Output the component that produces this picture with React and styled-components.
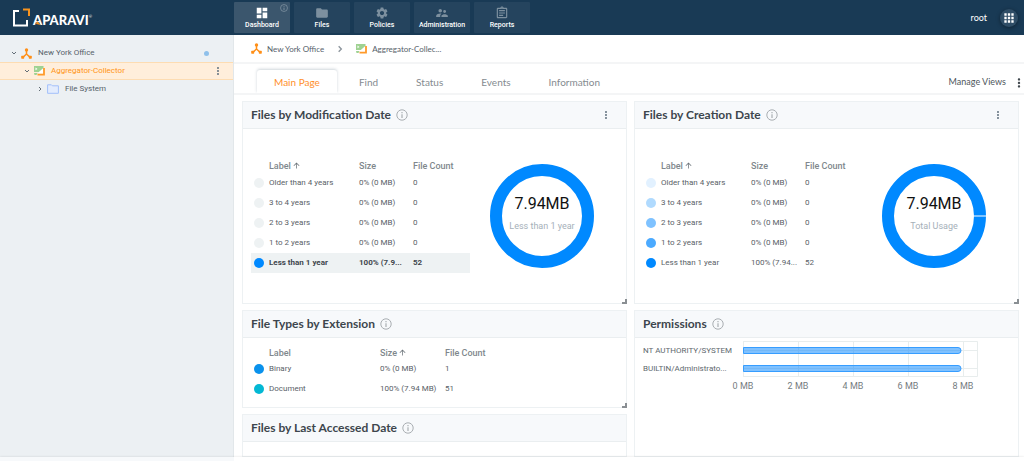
import React from "react";
import styled, { createGlobalStyle, css } from "styled-components";
import {
  MdDashboard,
  MdFolder,
  MdSettings,
  MdSupervisorAccount,
  MdOutlineAssignment,
  MdApps,
  MdMoreVert,
  MdArrowUpward,
} from "react-icons/md";

const sans = `Roboto, "Liberation Sans", sans-serif`;
const round = `Lato, "Open Sans", sans-serif`;

const GlobalStyle = createGlobalStyle`
  *, *::before, *::after { box-sizing: border-box; }
  body { margin: 0; font-family: ${sans}; color: #56616a; background: #fff; }
  button { font: inherit; color: inherit; background: none; border: 0; padding: 0; cursor: pointer; }
  a { color: inherit; text-decoration: none; }
  svg { display: block; flex: none; }
`;

const Page = styled.div`
  display: flex;
  flex-direction: column;
  height: 100vh;
  overflow: hidden;
`;

const Header = styled.header`
  display: flex;
  align-items: center;
  flex: none;
  height: 35px;
  background: #193a55;
`;

const Brand = styled.a`
  display: flex;
  align-items: center;
  gap: 3px;
  width: 234px;
  padding-left: 12px;
`;

const BrandName = styled.span`
  position: relative;
  display: flex;
  font: 900 13px/16px ${round};
  color: #fff;
  padding-top: 4px;
`;

const BrandAccent = styled.svg`
  position: absolute;
  left: 3px;
  bottom: 3px;
`;

const Registered = styled.span`
  font: 400 4px/10px ${round};
`;

const Nav = styled.nav`
  display: flex;
  gap: 4px;
  flex: 1;
`;

const NavItem = styled.a`
  position: relative;
  display: flex;
  flex-direction: column;
  align-items: center;
  width: 56px;
  height: 31px;
  padding-top: 4px;
  border-radius: 1px;
  font: 500 7px/10px ${sans};
  color: #fff;
  background: ${(p) => (p.$active ? "#3b566d" : "#25445e")};
  > svg { color: ${(p) => (p.$active ? "#fff" : "#7d909f")}; }
`;

const Hint = styled.span`
  position: absolute;
  top: 2px;
  right: 2px;
  color: #8d9dab;
`;

const User = styled.span`
  font: 400 9px/12px ${round};
  color: #fff;
  margin-right: 13px;
`;

const AppsButton = styled.button`
  display: grid;
  place-items: center;
  width: 18px;
  height: 18px;
  margin-right: 6px;
  border-radius: 50%;
  background: #2f4d66;
  box-shadow: 0 1px 4px rgba(0, 0, 0, 0.4);
  && { color: #fff; }
`;

const Body = styled.div`
  display: flex;
  flex: 1;
  min-height: 0;
`;

const Sidebar = styled.aside`
  flex: none;
  width: 234px;
  padding-top: 9px;
  background: #ecf0f3;
  border-right: 1px solid #e2e7ea;
`;

const TreeRow = styled.div`
  display: flex;
  align-items: center;
  height: 18px;
  padding: 0 11px 0 ${(p) => 11 + p.$level * 13}px;
  border: solid transparent;
  border-width: 1px 0;
  font: 400 8px/12px ${sans};
  color: #56616a;
  ${(p) =>
    p.$active &&
    css`
      color: #ff9416;
      background: #ffeedb;
      border-color: #fddcb2;
    `}
`;

const TreeLabel = styled.a`
  flex: 1;
  margin-left: 6px;
`;

const TreeToggle = styled.button`
  width: 6px;
  height: 6px;
  margin-right: 4px;
  && { color: #636e77; }
`;

const Dot = styled.span`
  display: block;
  width: ${(p) => p.$size}px;
  height: ${(p) => p.$size}px;
  border-radius: 50%;
  background: ${(p) => p.$color};
`;

const StatusDot = styled(Dot)`
  margin-right: 13px;
`;

const MoreButton = styled.button`
  width: 10px;
  height: 12px;
  display: grid;
  place-items: center;
  && { color: ${(p) => p.$color || "#6d7c88"}; }
`;

const Main = styled.main`
  flex: 1;
  min-width: 0;
  display: flex;
  flex-direction: column;
`;

const Crumbs = styled.nav`
  display: flex;
  align-items: center;
  flex: none;
  height: 29px;
  padding: 0 17px;
  border-bottom: 2px solid #f4f5f6;
  font: 400 8px/12px ${round};
`;

const Crumb = styled.a`
  display: flex;
  align-items: center;
  gap: 5px;
`;

const CrumbSep = styled.span`
  margin: 0 12px;
  color: #8b949c;
`;

const TabBar = styled.div`
  display: flex;
  align-items: flex-end;
  flex: none;
  height: 31px;
  padding: 0 2px 0 23px;
  border-bottom: 2px solid #f4f5f6;
`;

const TabList = styled.div`
  display: flex;
  flex: 1;
`;

const Tab = styled.button`
  height: 23px;
  padding: 1px ${(p) => (p.$active ? 17 : 19)}px 0;
  && {
    font: 400 10px/22px ${round};
    color: ${(p) => (p.$active ? "#ff8f2a" : "#858b90")};
  }
  ${(p) =>
    p.$active &&
    css`
      border-radius: 3px 3px 0 0;
      box-shadow: 0 -1px 3px rgba(50, 80, 100, 0.24);
      clip-path: inset(-4px -4px 0 -4px);
      margin-right: 3px;
    `}
`;

const ViewActions = styled.div`
  display: flex;
  align-items: center;
  gap: 6px;
  height: 23px;
`;

const ManageViews = styled.button`
  && { font: 400 9px/22px ${round}; color: #4e565c; }
`;

const Board = styled.div`
  display: flex;
  gap: 7px;
  flex: 1;
  min-height: 0;
  padding: 6px 5px 0 8px;
  overflow: hidden;
`;

const Column = styled.div`
  flex: 1;
  min-width: 0;
  display: flex;
  flex-direction: column;
  gap: 6px;
`;

const CardBox = styled.section`
  position: relative;
  flex: ${(p) => (p.$fill ? "1 0 auto" : "none")};
  border: 1px solid #edf1f3;
  background: #fff;
`;

const CardHead = styled.header`
  display: flex;
  align-items: center;
  gap: 5px;
  height: 27px;
  padding: 0 16px 0 8px;
  background: #f7f9fb;
  border-bottom: 1px solid #eaeef0;
  color: #a9aeb2;
`;

const CardTitle = styled.h2`
  margin: 0;
  font: 700 12px/16px ${round};
  color: #3d464d;
`;

const HeadSpacer = styled.span`
  flex: 1;
`;

const CardBody = styled.div`
  display: flex;
  align-items: center;
  min-height: ${(p) => p.$min || 0}px;
  padding: ${(p) => p.$pad || "0 8px"};
`;

const ResizeGrip = styled.span`
  position: absolute;
  right: -1px;
  bottom: -1px;
  width: 5px;
  height: 5px;
  border: solid #8a8f93;
  border-width: 0 2px 2px 0;
`;

const Table = styled.table`
  table-layout: fixed;
  width: ${(p) => p.$width}px;
  border-collapse: collapse;
  font: 400 8px/12px ${sans};
  color: #596167;
  th, td {
    padding: 0;
    text-align: left;
    white-space: nowrap;
  }
  td:first-child { padding-left: 3px; }
`;

const HeadCell = styled.th`
  height: 13px;
  font-weight: 500;
  color: #80878c;
  font-size: 9px;
  svg { display: inline-block; vertical-align: -1px; margin-left: 1px; color: #6a7278; }
`;

const Row = styled.tr`
  height: 20px;
  ${(p) =>
    p.$selected &&
    css`
      background: #eef2f3;
      font-weight: 700;
      color: #3f474d;
    `}
`;

const DonutSlot = styled.div`
  flex: 1;
  display: flex;
  justify-content: center;
  padding-right: 4px;
`;

const Footer = styled.footer`
  flex: none;
  height: 4px;
  background: linear-gradient(to right, #f7f9fb 234px, #fff 234px);
  box-shadow: 0 -1px 2px rgba(0, 0, 0, 0.06);
  position: relative;
`;

function Logo() {
  return (
    <svg width="18" height="20" viewBox="0 0 18 20" fill="none">
      <path d="M7 3H2V17.500H15V12" stroke="#fff" strokeWidth="2" />
      <path d="M11 1.500H17V8" stroke="#f7931e" strokeWidth="2" />
    </svg>
  );
}

function NetworkIcon() {
  return (
    <svg width="11" height="11" viewBox="0 0 11 11">
      <path d="M5.500 2V6L2 9.200M5.500 6L9 9.200" stroke="#ff8f17" strokeWidth="1.500" fill="none" />
      <circle cx="5.500" cy="1.900" r="1.700" fill="#ff8f17" />
      <rect x="0.200" y="7.700" width="3" height="3" rx="0.600" fill="#ff8f17" />
      <rect x="7.800" y="7.700" width="3" height="3" rx="0.600" fill="#ff8f17" />
    </svg>
  );
}

function CollectorIcon() {
  return (
    <svg width="11" height="10" viewBox="0 0 11 10">
      <path d="M0 0H9.500V2L5 6H0Z" fill="#9fd292" />
      <path d="M1.500 1.500L3.500 3L1.500 4.200Z" fill="#fff" />
      <path d="M0 7H3.500L2.500 9H0.500Z" fill="#9fd292" />
      <path d="M4.500 6.500L9 2.500V7.500H4.500Z" fill="#fff" />
      <path d="M10 2V8.700H3.500" stroke="#ff9a2a" strokeWidth="1.800" fill="none" />
    </svg>
  );
}

function FolderIcon() {
  return (
    <svg width="12" height="10" viewBox="0 0 12 10">
      <path d="M0.600 0.800H4.400L5.400 1.800H11.400V9.300H0.600Z" fill="#e3ecfd" stroke="#a3c0fa" />
    </svg>
  );
}

function Chevron({ down, size = 6 }) {
  return (
    <svg width={size} height={size} viewBox="0 0 6 6" fill="none" stroke="currentColor" strokeWidth="1">
      <path d={down ? "M1 2L3 4L5 2" : "M2 1L4 3L2 5"} />
    </svg>
  );
}

function InfoIcon({ size = 12 }) {
  return (
    <svg width={size} height={size} viewBox="0 0 12 12" fill="none" stroke="currentColor">
      <circle cx="6" cy="6" r="5.200" />
      <path d="M6 5.300V9M6 3V4.200" strokeWidth="1.200" />
    </svg>
  );
}

function Donut({ caption, notch }) {
  return (
    <svg width="106" height="106" viewBox="0 0 106 106" role="img" aria-label={`7.94MB ${caption}`}>
      <circle cx="53" cy="53" r="46" fill="none" stroke="#0089ff" strokeWidth="12" />
      {notch && <path d="M93 53H106" stroke="#fff" />}
      <text x="53" y="46" textAnchor="middle" fontFamily="Roboto" fontSize="16" fill="#111">
        7.94MB
      </text>
      <text x="53" y="66" textAnchor="middle" fontFamily="Roboto" fontSize="9" fill="#a5b0b9">
        {caption}
      </text>
    </svg>
  );
}

function PermissionsChart() {
  const ticks = [0, 2, 4, 6, 8];
  const rows = ["NT AUTHORITY/SYSTEM", "BUILTIN/Administrato..."];
  return (
    <svg width="350" height="56" viewBox="0 0 350 56" fontFamily="Roboto" role="img" aria-label="Permissions">
      <path d="M100.500 1.500H334.500V36.500H100.500ZM100 10.500H334M100 28.500H334" fill="none" stroke="#e8eded" />
      {ticks.map((t, i) => (
        <g key={t}>
          <path d={`M${100 + i * 55}.500 1V37`} stroke="#e8eded" />
          <text x={100 + i * 55} y="49" textAnchor="middle" fontSize="9" fill="#757c81">
            {t} MB
          </text>
        </g>
      ))}
      {rows.map((label, i) => (
        <g key={label}>
          <text x="0" y={13 + i * 18} fontSize="8" fill="#60686e">
            {label}
          </text>
          <path
            d={`M100.500 ${7 + i * 18}.500H315Q318 ${7 + i * 18}.500 318 ${10 + i * 18}.500T315 ${13 + i * 18}.500H100.500Z`}
            fill="#0084ff"
            fillOpacity="0.500"
            stroke="#369dff"
          />
        </g>
      ))}
    </svg>
  );
}

function Card({ title, more, grip, fill, children }) {
  return (
    <CardBox $fill={fill}>
      <CardHead>
        <CardTitle>{title}</CardTitle>
        <InfoIcon />
        <HeadSpacer />
        {more && (
          <MoreButton aria-label={`${title} options`}>
            <MdMoreVert size={12} />
          </MoreButton>
        )}
      </CardHead>
      {children}
      {grip && <ResizeGrip />}
    </CardBox>
  );
}

function UsageTable({ widths, sort, rows }) {
  return (
    <Table $width={widths.reduce((a, b) => a + b, 0)}>
      <colgroup>
        {widths.map((w, i) => (
          <col key={i} style={{ width: w }} />
        ))}
      </colgroup>
      <thead>
        <tr>
          <HeadCell />
          {["Label", "Size", "File Count"].map((h) => (
            <HeadCell key={h} scope="col">
              {h}
              {sort === h && <MdArrowUpward size={9} />}
            </HeadCell>
          ))}
        </tr>
      </thead>
      <tbody>
        {rows.map(([color, label, size, count, selected]) => (
          <Row key={label} $selected={selected}>
            <td>
              <Dot $size={10} $color={color} />
            </td>
            <td>{label}</td>
            <td>{size}</td>
            <td>{count}</td>
          </Row>
        ))}
      </tbody>
    </Table>
  );
}

const ageRows = (colors, total, selected) => [
  [colors[0], "Older than 4 years", "0% (0 MB)", 0],
  [colors[1], "3 to 4 years", "0% (0 MB)", 0],
  [colors[2], "2 to 3 years", "0% (0 MB)", 0],
  [colors[3], "1 to 2 years", "0% (0 MB)", 0],
  [colors[4], "Less than 1 year", total, 52, selected],
];

const modified = ageRows(["#eef2f3", "#eef2f3", "#eef2f3", "#eef2f3", "#0089ff"], "100% (7.9...", true);
const created = ageRows(["#e2f1ff", "#b0dafe", "#7fc2ff", "#4baaff", "#0089ff"], "100% (7.94...");
const extensions = [
  ["#0a92ec", "Binary", "0% (0 MB)", 1],
  ["#04b8d4", "Document", "100% (7.94 MB)", 51],
];

const navItems = [
  ["Dashboard", MdDashboard],
  ["Files", MdFolder],
  ["Policies", MdSettings],
  ["Administration", MdSupervisorAccount],
  ["Reports", MdOutlineAssignment],
];

export default function App() {
  return (
    <Page>
      <GlobalStyle />
      <Header>
        <Brand href="#">
          <Logo />
          <BrandName>
            APARAVI
            <Registered>®</Registered>
            <BrandAccent width="6" height="4" viewBox="0 0 6 4">
              <path d="M1 0L5 4L0 3Z" fill="#f7931e" />
            </BrandAccent>
          </BrandName>
        </Brand>
        <Nav>
          {navItems.map(([label, Icon], i) => (
            <NavItem key={label} href="#" $active={i === 0}>
              <Icon size={14} />
              {label}
              {i === 0 && (
                <Hint>
                  <InfoIcon size={8} />
                </Hint>
              )}
            </NavItem>
          ))}
        </Nav>
        <User>root</User>
        <AppsButton aria-label="Applications">
          <MdApps size={14} />
        </AppsButton>
      </Header>
      <Body>
        <Sidebar>
          <TreeRow $level={0}>
            <TreeToggle aria-label="Collapse New York Office">
              <Chevron down />
            </TreeToggle>
            <NetworkIcon />
            <TreeLabel href="#">New York Office</TreeLabel>
            <StatusDot $size={5} $color="#8fc0ea" />
          </TreeRow>
          <TreeRow $level={1} $active>
            <TreeToggle aria-label="Collapse Aggregator-Collector">
              <Chevron down />
            </TreeToggle>
            <CollectorIcon />
            <TreeLabel href="#">Aggregator-Collector</TreeLabel>
            <MoreButton aria-label="Aggregator-Collector options">
              <MdMoreVert size={12} />
            </MoreButton>
          </TreeRow>
          <TreeRow $level={2}>
            <TreeToggle aria-label="Expand File System">
              <Chevron />
            </TreeToggle>
            <FolderIcon />
            <TreeLabel href="#">File System</TreeLabel>
          </TreeRow>
        </Sidebar>
        <Main>
          <Crumbs aria-label="Breadcrumb">
            <Crumb href="#">
              <NetworkIcon />
              New York Office
            </Crumb>
            <CrumbSep>
              <Chevron size={8} />
            </CrumbSep>
            <Crumb href="#">
              <CollectorIcon />
              Aggregator-Collec...
            </Crumb>
          </Crumbs>
          <TabBar>
            <TabList role="tablist">
              {["Main Page", "Find", "Status", "Events", "Information"].map((t, i) => (
                <Tab key={t} role="tab" aria-selected={i === 0} $active={i === 0}>
                  {t}
                </Tab>
              ))}
            </TabList>
            <ViewActions>
              <ManageViews>Manage Views</ManageViews>
              <MoreButton $color="#3f474d" aria-label="View options">
                <MdMoreVert size={14} />
              </MoreButton>
            </ViewActions>
          </TabBar>
          <Board>
            <Column>
              <Card title="Files by Modification Date" more grip>
                <CardBody $min={174}>
                  <UsageTable widths={[18, 90, 54, 57]} sort="Label" rows={modified} />
                  <DonutSlot>
                    <Donut caption="Less than 1 year" />
                  </DonutSlot>
                </CardBody>
              </Card>
              <Card title="File Types by Extension" grip>
                <CardBody $pad="8px">
                  <UsageTable widths={[18, 111, 65, 57]} sort="Size" rows={extensions} />
                </CardBody>
              </Card>
              <Card title="Files by Last Accessed Date" fill />
            </Column>
            <Column>
              <Card title="Files by Creation Date" more grip>
                <CardBody $min={174}>
                  <UsageTable widths={[18, 90, 54, 57]} sort="Label" rows={created} />
                  <DonutSlot>
                    <Donut caption="Total Usage" notch />
                  </DonutSlot>
                </CardBody>
              </Card>
              <Card title="Permissions" fill>
                <CardBody $pad="2px 8px">
                  <PermissionsChart />
                </CardBody>
              </Card>
            </Column>
          </Board>
        </Main>
      </Body>
      <Footer />
    </Page>
  );
}
